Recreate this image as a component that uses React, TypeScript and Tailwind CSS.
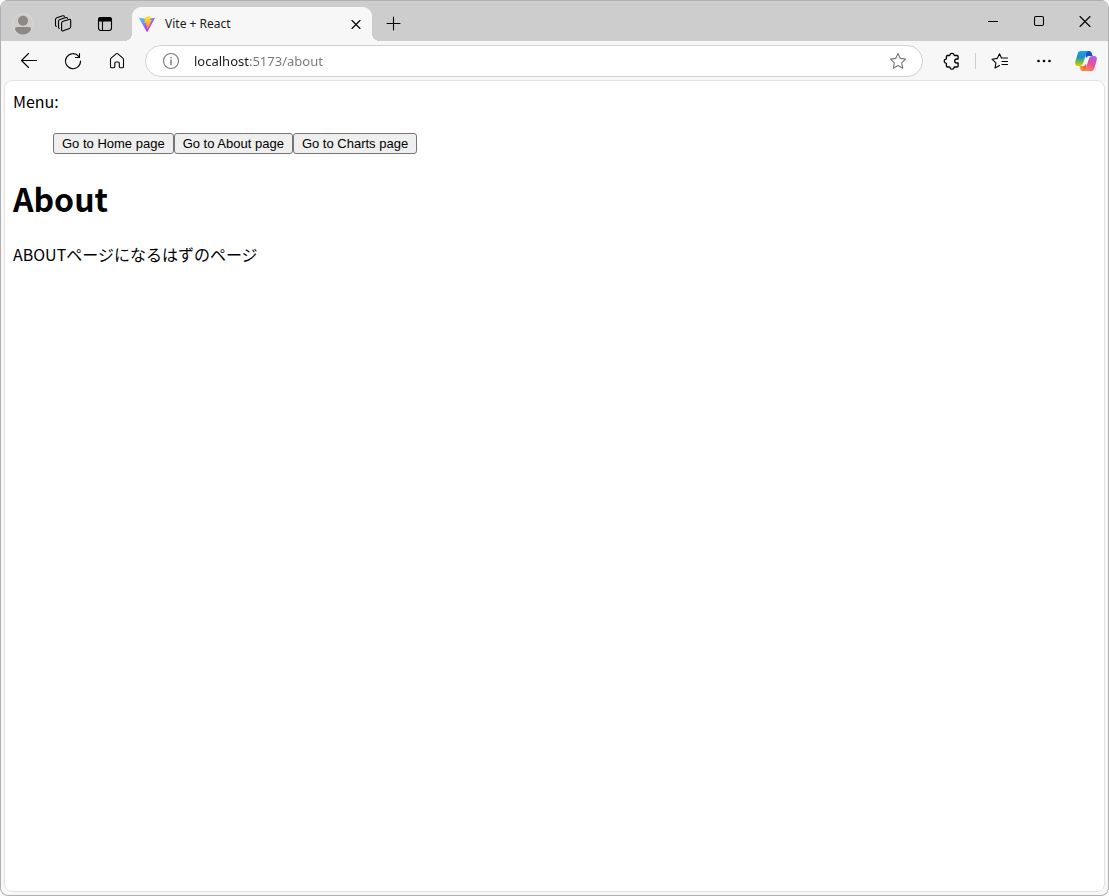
import React from 'react';

interface IconButtonProps {
  label: string;
  className?: string;
  children: React.ReactNode;
}

function IconButton({ label, className = '', children }: IconButtonProps) {
  return (
    <button type="button" aria-label={label} className={`flex shrink-0 items-center justify-center ${className}`}>
      {children}
    </button>
  );
}

interface IconProps {
  size?: number;
  className?: string;
  children: React.ReactNode;
}

function Icon({ size = 20, className = '', children }: IconProps) {
  return (
    <svg
      width={size}
      height={size}
      viewBox={`0 0 ${size} ${size}`}
      fill="none"
      stroke="currentColor"
      strokeWidth="1.1"
      strokeLinecap="round"
      strokeLinejoin="round"
      className={className}
      aria-hidden="true"
    >
      {children}
    </svg>
  );
}

function ViteLogo() {
  return (
    <svg width="16" height="16" viewBox="0 0 256 257" aria-hidden="true">
      <defs>
        <linearGradient id="viteBody" x1="-.828%" x2="57.636%" y1="7.652%" y2="78.411%">
          <stop offset="0%" stopColor="#41D1FF" />
          <stop offset="100%" stopColor="#BD34FE" />
        </linearGradient>
        <linearGradient id="viteBolt" x1="43.376%" x2="50.316%" y1="2.242%" y2="89.03%">
          <stop offset="0%" stopColor="#FFEA83" />
          <stop offset="8.333%" stopColor="#FFDD35" />
          <stop offset="100%" stopColor="#FFA800" />
        </linearGradient>
      </defs>
      <path
        fill="url(#viteBody)"
        d="M255.153 37.938L134.897 252.976c-2.483 4.44-8.862 4.466-11.382.048L.875 37.958c-2.746-4.814 1.371-10.646 6.827-9.67l120.385 21.517a6.537 6.537 0 0 0 2.322-.004l117.867-21.483c5.438-.991 9.574 4.796 6.877 9.62Z"
      />
      <path
        fill="url(#viteBolt)"
        d="M185.432.063L96.44 17.501a3.268 3.268 0 0 0-2.634 3.014l-5.474 92.456a3.268 3.268 0 0 0 3.997 3.378l24.777-5.718c2.318-.535 4.413 1.507 3.936 3.838l-7.361 36.047c-.495 2.426 1.782 4.5 4.151 3.78l15.304-4.649c2.372-.72 4.652 1.36 4.15 3.788l-11.698 56.621c-.732 3.542 3.979 5.473 5.943 2.437l1.313-2.028l72.516-144.72c1.215-2.423-.88-5.186-3.54-4.672l-25.505 4.922c-2.396.462-4.435-1.77-3.759-4.114l16.646-57.705c.677-2.35-1.37-4.583-3.769-4.113Z"
      />
    </svg>
  );
}

function CopilotLogo() {
  return (
    <svg width="24" height="24" viewBox="0 0 24 24" aria-hidden="true">
      <defs>
        <linearGradient id="copilotLeft" x1="0" x2="0" y1="0" y2="1">
          <stop offset="0%" stopColor="#19a5f0" />
          <stop offset="40%" stopColor="#1a8fd0" />
          <stop offset="70%" stopColor="#6cbb4a" />
          <stop offset="100%" stopColor="#f5c400" />
        </linearGradient>
        <linearGradient id="copilotRight" x1="0.8" x2="0.3" y1="0" y2="1">
          <stop offset="0%" stopColor="#a366f0" />
          <stop offset="50%" stopColor="#ea4c9b" />
          <stop offset="100%" stopColor="#ff8a4c" />
        </linearGradient>
        <linearGradient id="copilotBottom" x1="0" x2="1" y1="0" y2="0">
          <stop offset="0%" stopColor="#f7b02c" />
          <stop offset="100%" stopColor="#f0484e" />
        </linearGradient>
      </defs>
      <path fill="#1a4fd0" d="M11 2h4c1.600 0 2.400 1 2.800 2.300L18.600 7H15c-1.500 0-2.500.9-3 2.400z" />
      <path fill="url(#copilotBottom)" d="M13 22H9c-1.600 0-2.400-1-2.800-2.300L5.400 17H9c1.500 0 2.500-.9 3-2.400z" />
      <path
        fill="url(#copilotLeft)"
        d="M6.500 2H15c-1.500 0-2.300 1-2.800 2.500L9.200 14c-.6 2-1.600 3-3.500 3H4c-2.400 0-3.400-1.800-2.700-4.200L3.500 5.200C4 3.200 4.800 2 6.500 2z"
      />
      <path
        fill="url(#copilotRight)"
        d="M17.500 22H9c1.500 0 2.300-1 2.800-2.500l3-9.500c.6-2 1.600-3 3.500-3H20c2.400 0 3.400 1.800 2.700 4.200l-2.200 7.600c-.5 2-1.300 3.200-3 3.200z"
      />
    </svg>
  );
}

function TitleBar() {
  return (
    <header className="flex h-[41px] items-end border-t border-[#b0b0b0] bg-[#cdcdcd] pl-0.5">
      <IconButton label="Profile" className="h-[34px] w-10">
        <svg width="22" height="22" viewBox="0 0 22 22" aria-hidden="true">
          <circle cx="11" cy="11" r="10.500" fill="#d0cecb" stroke="#d9d7d3" />
          <circle cx="11" cy="7.800" r="5" fill="#8b8886" />
          <path d="M3 16.500C3 14.800 4 14 5.500 14h11c1.500 0 2.500.8 2.500 2.500C17.500 20 14.500 21.500 11 21.500S4.500 20 3 16.500z" fill="#8b8886" />
        </svg>
      </IconButton>
      <IconButton label="Workspaces" className="h-[34px] w-10">
        <Icon>
          <path d="M10 7.300l6-1.900c1-.3 1.700.2 1.700 1.200v6.200c0 .8-.4 1.400-1.200 1.700l-6.200 2.300c-1 .4-1.700-.1-1.700-1.100V9.200c0-1 .5-1.600 1.400-1.900z" />
          <path d="M6.300 14.500c-.6-.2-.8-.6-.8-1.200V7.400c0-.9.500-1.500 1.300-1.800l6.200-2c.8-.2 1.400 0 1.600.7" />
          <path d="M3.300 12.500c-.6-.2-.8-.6-.8-1.200V5.600c0-.9.500-1.500 1.300-1.800l6-2c.8-.2 1.400 0 1.600.7" />
        </Icon>
      </IconButton>
      <IconButton label="Tab actions" className="h-[34px] w-11">
        <Icon>
          <rect x="3.500" y="3.500" width="13" height="13" rx="2.500" />
          <path d="M3.500 6c0-1.500 1-2.500 2.500-2.500h8c1.500 0 2.500 1 2.500 2.500v1h-13z" fill="currentColor" />
          <path d="M7.500 7v9.500" />
        </Icon>
      </IconButton>

      <div className="relative ml-[5px] flex h-[34px] w-60 items-center rounded-t-[9px] bg-[#f7f7f7] pl-[7px] pr-1.5">
        <span className="absolute bottom-0 -left-2 size-2 bg-[radial-gradient(circle_at_0_0,#cdcdcd_8px,#f7f7f7_8px)]" />
        <span className="absolute bottom-0 -right-2 size-2 bg-[radial-gradient(circle_at_100%_0,#cdcdcd_8px,#f7f7f7_8px)]" />
        <ViteLogo />
        <span className="ml-2.5 flex-1 font-['Noto_Sans',sans-serif] text-[12px] leading-4 text-[#1a1a1a]">Vite + React</span>
        <IconButton label="Close tab" className="size-5">
          <Icon>
            <path d="M6 6.500l8 8M14 6.500l-8 8" />
          </Icon>
        </IconButton>
      </div>
      <IconButton label="New tab" className="ml-1.5 h-[34px] w-8">
        <Icon>
          <path d="M9.500 3v13M3 9.500h13" />
        </Icon>
      </IconButton>

      <div className="ml-auto flex h-full">
        <IconButton label="Minimize" className="w-[46px]">
          <Icon>
            <path d="M5 10.500h10" strokeLinecap="butt" strokeWidth="1" />
          </Icon>
        </IconButton>
        <IconButton label="Maximize" className="w-[46px]">
          <Icon>
            <rect x="5.500" y="5.500" width="9" height="9" rx="1.500" />
          </Icon>
        </IconButton>
        <IconButton label="Close" className="w-[46px]">
          <Icon>
            <path d="M5 5.500l10 10M15 5.500l-10 10" />
          </Icon>
        </IconButton>
      </div>
    </header>
  );
}

function Toolbar() {
  return (
    <div className="flex h-[39px] items-center bg-[#f7f7f7] pl-1.5">
      <IconButton label="Back" className="h-9 w-11">
        <Icon>
          <path d="M2.500 9.500h15M9.500 2.500l-7 7 7 7" />
        </Icon>
      </IconButton>
      <IconButton label="Refresh" className="h-9 w-11">
        <Icon>
          <path d="M15.700 5.300A7.500 7.500 0 1 0 17.500 10" />
          <path d="M16.500 2.500v4h-4" />
        </Icon>
      </IconButton>
      <IconButton label="Home" className="h-9 w-11">
        <Icon>
          <path d="M3.500 8.300c0-.5.200-.9.600-1.200l5-4.200c.6-.5 1.200-.5 1.800 0l5 4.200c.4.300.6.7.6 1.200v7.200c0 .8-.4 1.300-1.200 1.300h-1.800c-.7 0-1.200-.4-1.200-1.200v-3.300c0-.8-.4-1.300-1.200-1.300H9c-.8 0-1.200.5-1.200 1.300v3.300c0 .8-.5 1.200-1.200 1.200H4.700c-.8 0-1.200-.5-1.200-1.300z" />
        </Icon>
      </IconButton>

      <form className="ml-1.5 flex h-8 flex-1 items-center rounded-full border border-[#d2d2d2] bg-white pl-4 pr-3.5">
        <IconButton label="View site information" className="text-[#767676]">
          <Icon size={18}>
            <circle cx="9" cy="9" r="7.500" />
            <path d="M9 8v4.500M9 5.500v.3" strokeWidth="1.400" />
          </Icon>
        </IconButton>
        {/* the host part of the url is darker than the rest */}
        <input
          type="text"
          aria-label="Address"
          defaultValue="localhost:5173/about"
          className="ml-3.5 h-6 min-w-0 flex-1 bg-[linear-gradient(90deg,#1a1a1a_55px,#767676_55px)] bg-clip-text font-['Noto_Sans',sans-serif] text-[13px] text-transparent outline-none"
        />
        <IconButton label="Add to favorites" className="text-[#767676]">
          <Icon>
            <path d="M10 2.500l2.300 4.900 5.300.7-3.900 3.700 1 5.400-4.700-2.600-4.700 2.600 1-5.400-3.900-3.700 5.300-.7z" />
          </Icon>
        </IconButton>
      </form>

      <IconButton label="Extensions" className="ml-1.5 h-9 w-11">
        <Icon>
          <path
            strokeWidth="1.300"
            d="M6.500 4.500h2c.2 0 .4-.2.400-.5C9 3 9.900 2.400 11 2.400S13 3 13.100 4c0 .3.200.5.400.5h2.500c.6 0 1.100.5 1.100 1.100V8h-1.300c-1.200 0-2.100.9-2.100 2s.9 2 2.100 2h1.300v2.900c0 .6-.5 1.100-1.100 1.100h-2.500c-.2 0-.4.200-.4.500-.1 1-1 1.600-2.100 1.600S9 17.500 8.900 16.500c0-.3-.2-.5-.4-.5h-2c-.6 0-1.100-.5-1.100-1.100v-2.400c0-.3-.2-.4-.5-.4C3.900 12 3.200 11.200 3.200 10.200s.7-1.900 1.700-2c.3 0 .5-.2.500-.4V5.600c0-.6.500-1.100 1.100-1.100z"
          />
        </Icon>
      </IconButton>
      <span className="ml-0.5 h-4 w-px bg-[#cdcdcd]" />
      <IconButton label="Favorites" className="ml-0.5 h-9 w-11">
        <Icon>
          <path d="M9.500 14.500L5 17l.9-5.200L2 8.200l5.200-.8L9.500 2.800l2 4.200h6" />
          <path d="M12 10.500h5.500M12 13.500h5.500" />
        </Icon>
      </IconButton>
      <IconButton label="Settings and more" className="h-9 w-11">
        <Icon>
          <g fill="currentColor" stroke="none">
            <circle cx="4.500" cy="10" r="1.300" />
            <circle cx="10" cy="10" r="1.300" />
            <circle cx="15.500" cy="10" r="1.300" />
          </g>
        </Icon>
      </IconButton>
      <IconButton label="Copilot" className="h-9 w-10">
        <CopilotLogo />
      </IconButton>
      <span className="w-0.5" />
    </div>
  );
}

const pages = ['Home', 'About', 'Charts'];

function AboutPage() {
  return (
    <main className="mx-[3px] mb-[3px] flex-1 rounded-lg border border-[#e4e4e4] bg-white px-2 pt-2 font-['Noto_Sans_CJK_JP',sans-serif] text-black">
      <nav aria-label="Menu">
        <p className="text-[16px] leading-6">Menu:</p>
        <ul className="mt-5 flex pl-10">
          {pages.map((page) => (
            <li key={page} className="flex">
              <button
                type="button"
                className="h-[21px] rounded-[3px] border border-[#767676] bg-[#efefef] px-2 font-['Liberation_Sans',sans-serif] text-[13px] leading-4"
              >
                Go to {page} page
              </button>
            </li>
          ))}
        </ul>
      </nav>
      <h1 className="mt-5 text-[32px] leading-[48px] font-bold">About</h1>
      <p className="mt-5 text-[16px] leading-6">ABOUTページになるはずのページ</p>
    </main>
  );
}

export default function App() {
  return (
    <div className="flex min-h-screen flex-col overflow-hidden rounded-lg border-x border-b border-[#b0b0b0] bg-[#f7f7f7]">
      <TitleBar />
      <Toolbar />
      <AboutPage />
    </div>
  );
}
